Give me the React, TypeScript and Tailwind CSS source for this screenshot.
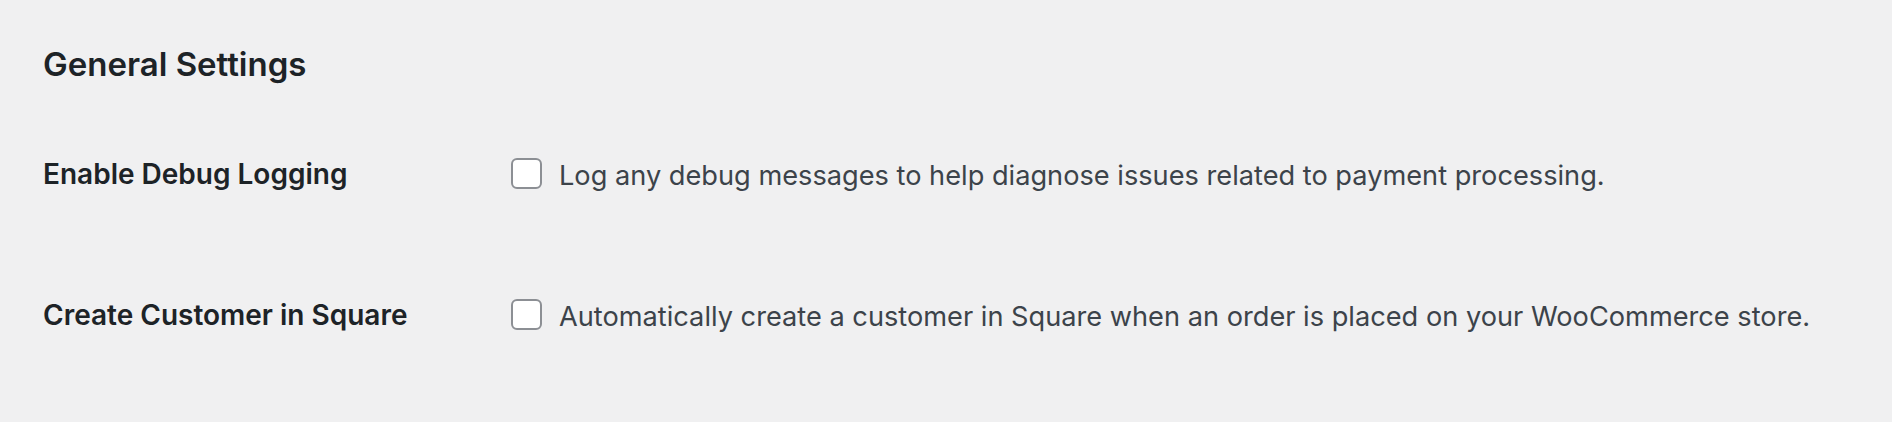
import React from 'react';

const rows = [
  {
    label: 'Enable Debug Logging',
    desc: 'Log any debug messages to help diagnose issues related to payment processing.',
  },
  {
    label: 'Create Customer in Square',
    desc: 'Automatically create a customer in Square when an order is placed on your WooCommerce store.',
  },
];

export default function App() {
  return (
    <div className="min-h-[422px] w-full bg-[#f0f0f1] pl-[43px] pt-[44px] font-['Inter',sans-serif]">
      <h2 className="text-[33px] leading-[40px] font-semibold text-[#1d2327]">General Settings</h2>

      <div className="mt-[73px] flex flex-col">
        {rows.map((row) => (
          <div key={row.label} className="flex h-[141px] items-start">
            <div className="w-[468px] shrink-0 text-[28px] leading-[34px] font-semibold text-[#1d2327]">
              {row.label}
            </div>
            <label className="mt-[1px] flex items-start gap-[17px]">
              <input
                type="checkbox"
                className="h-[31px] w-[31px] shrink-0 appearance-none rounded-[6px] border-2 border-[#8c8f94] bg-white"
              />
              <span className="mt-[1px] text-[27.2px] leading-[34px] text-[#3c434a]">{row.desc}</span>
            </label>
          </div>
        ))}
      </div>
    </div>
  );
}
